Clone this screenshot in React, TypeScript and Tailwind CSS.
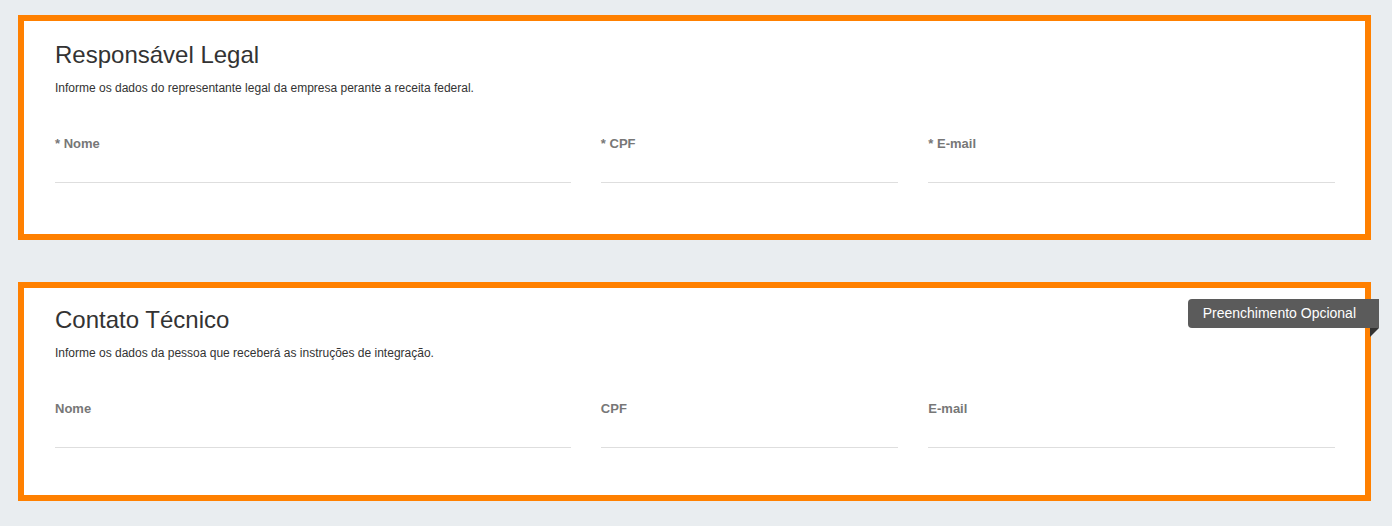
type Field = { label: string; width: string };

type SectionProps = {
  title: string;
  subtitle: string;
  fields: Field[];
  badge?: string;
  className?: string;
};

const required: Field[] = [
  { label: "* Nome", width: "w-5/12" },
  { label: "* CPF", width: "w-3/12" },
  { label: "* E-mail", width: "w-4/12" },
];

const optional: Field[] = [
  { label: "Nome", width: "w-5/12" },
  { label: "CPF", width: "w-3/12" },
  { label: "E-mail", width: "w-4/12" },
];

function Section({ title, subtitle, fields, badge, className }: SectionProps) {
  return (
    <div className={`relative ml-[18px] mr-[21px] border-[6px] border-[#ff8000] bg-white pl-[31px] pr-[30px] ${className ?? ""}`}>
      {badge ? (
        <div className="absolute right-[-14px] top-[11px]">
          <div className="flex h-[29px] items-center rounded-l-[4px] bg-[#5b5b5b] pl-[15px] pr-[23px] text-[14px] text-white">
            {badge}
          </div>
          <div className="ml-auto h-0 w-0 border-r-[9px] border-t-[9px] border-r-transparent border-t-[#333]" />
        </div>
      ) : null}

      <h2 className="text-[24px] leading-[28px] text-[#333]">{title}</h2>
      <p className="mt-[11px] text-[12px] leading-[17px] text-[#333]">{subtitle}</p>

      <div className="-mx-[15px] mt-[38px] flex">
        {fields.map((f) => (
          <div key={f.label} className={`${f.width} px-[15px]`}>
            <label className="block text-[13px] font-bold leading-[18px] text-[#777]">{f.label}</label>
            <input className="block h-[30px] w-full border-b border-[#dedede] bg-transparent text-[14px] outline-none" />
          </div>
        ))}
      </div>
    </div>
  );
}

export default function App() {
  return (
    <div className="min-h-[526px] bg-[#e9edf0] pb-[25px] pt-[15px] font-['Liberation_Sans',Arial,sans-serif]">
      <Section
        title="Responsável Legal"
        subtitle="Informe os dados do representante legal da empresa perante a receita federal."
        fields={required}
        className="pb-[51px] pt-[20px]"
      />
      <Section
        title="Contato Técnico"
        subtitle="Informe os dados da pessoa que receberá as instruções de integração."
        fields={optional}
        badge="Preenchimento Opcional"
        className="mt-[42px] pb-[47px] pt-[18px]"
      />
    </div>
  );
}
